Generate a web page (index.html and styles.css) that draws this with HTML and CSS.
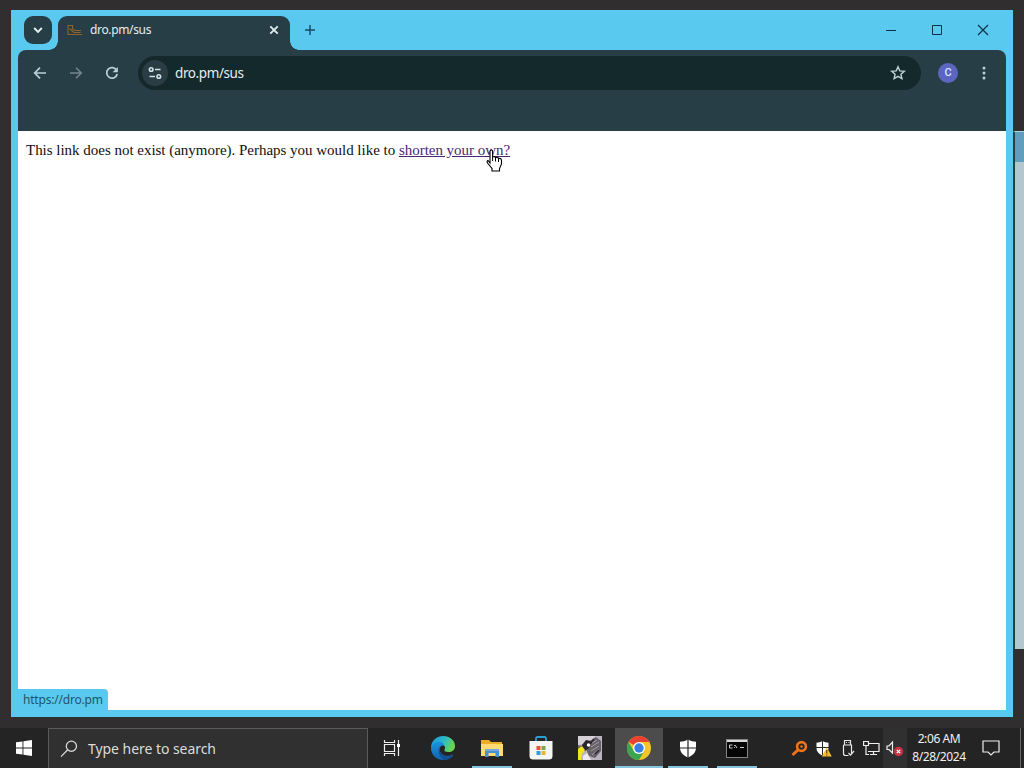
FILE: index.html
```html
<!DOCTYPE html>
<html lang="en">
<head>
    <meta charset="UTF-8">
    <title>dro.pm/sus</title>
    <link rel="stylesheet" href="styles.css">
</head>
<body>

    <div class="back-window"></div>

    <div class="desktop">
        <div class="window">
            <!-- Tab strip -->
            <div class="titlebar">
                <div class="tab-search">
                    <svg width="10" height="10" viewBox="0 0 10 10"><path d="M1.2 3L5 6.800L8.800 3" fill="none" stroke="#e4f0f2" stroke-width="1.9"/></svg>
                </div>
                <div class="tab">
                    <svg class="favicon" width="17" height="12" viewBox="0 0 17 12"><path d="M2 10V1.500h4.500v3.500L9 6.500h6M3.500 4.500L8 8.500h6.500M1.500 10.500H16" fill="none" stroke="#91622b" stroke-width="1.1"/></svg>
                    <span class="tab-title">dro.pm/sus</span>
                    <svg width="10" height="10" viewBox="0 0 10 10"><path d="M1.3 1.3L8.7 8.7M8.7 1.3L1.3 8.7" stroke="#e2eff0" stroke-width="1.8"/></svg>
                </div>
                <svg class="new-tab" width="12" height="12" viewBox="0 0 12 12"><path d="M6 1v10M1 6h10" stroke="#174861" stroke-width="1.4"/></svg>
                <div class="controls">
                    <span class="control"><svg width="12" height="12" viewBox="0 0 12 12"><path d="M1 6.5h10" stroke="#0b3047"/></svg></span>
                    <span class="control"><svg width="12" height="12" viewBox="0 0 12 12"><path d="M1.5 1.5h9v9h-9z" fill="none" stroke="#0b3047"/></svg></span>
                    <span class="control"><svg width="12" height="12" viewBox="0 0 12 12"><path d="M1 1l10 10M11 1L1 11" stroke="#0b3047" stroke-width="1.2"/></svg></span>
                </div>
            </div>

            <div class="toolbar">
                <div class="nav">
                    <svg class="nav-icon" width="14" height="14" viewBox="0 0 14 14"><path d="M13 7H2M7 1.7L1.7 7L7 12.3" fill="none" stroke="#b9d0d6" stroke-width="1.7"/></svg>
                    <svg class="nav-icon" width="14" height="14" viewBox="0 0 14 14"><path d="M1 7h11M7 1.7L12.3 7L7 12.3" fill="none" stroke="#71868f" stroke-width="1.6"/></svg>
                    <svg class="nav-icon" width="14" height="14" viewBox="0 0 14 14"><path d="M11.6 4.2A5.3 5.3 0 1 0 12.2 8" fill="none" stroke="#b9d0d6" stroke-width="1.7"/><path d="M12.9 .9v5.3H7.6z" fill="#b9d0d6"/></svg>
                </div>
                <div class="address">
                    <span class="site-info">
                        <svg width="14" height="14" viewBox="0 0 14 14" fill="none" stroke="#d3e4e6" stroke-width="1.6"><circle cx="3.2" cy="3.5" r="1.8"/><path d="M7 3.5h5.5M1.500 10.5H7"/><circle cx="10.8" cy="10.5" r="1.8"/></svg>
                    </span>
                    <span class="url">dro.pm/sus</span>
                    <svg width="16" height="16" viewBox="0 0 16 16"><path d="M8 1.8l1.8 4.1 4.5.4-3.4 2.9 1 4.4L8 11.3l-3.9 2.3 1-4.4-3.4-2.9 4.5-.4z" fill="none" stroke="#bdd3d8" stroke-width="1.4"/></svg>
                </div>
                <span class="avatar">C</span>
                <svg class="menu" width="4" height="14" viewBox="0 0 4 14" fill="#b9d0d6"><circle cx="2" cy="2" r="1.5"/><circle cx="2" cy="7" r="1.5"/><circle cx="2" cy="12" r="1.5"/></svg>
            </div>
            <div class="bookmarks"></div>

            <div class="page">
                <p class="message">This link does not exist (anymore). Perhaps you would like to <a class="link" href="#">shorten your own?</a></p>
                <div class="status">https://dro.pm</div>
            </div>
        </div>
    </div>

    <div class="taskbar">
        <div class="start">
            <svg width="16" height="16" viewBox="0 0 16 16" fill="#fff"><path d="M0 2.3L6.5 1.4V7.5H0zM7.4 1.2L16 0v7.5H7.4zM0 8.4h6.5v6.2L0 13.7zM7.4 8.4H16V16l-8.6-1.2z"/></svg>
        </div>
        <div class="search">
            <svg width="18" height="18" viewBox="0 0 18 18" fill="none" stroke="#d8d8d8" stroke-width="1.3"><circle cx="11.4" cy="6.2" r="5.1"/><path d="M7.7 9.8L1 16.6"/></svg>
            <span class="search-text">Type here to search</span>
        </div>
        <div class="app">
            <svg width="18" height="16" viewBox="0 0 18 16" fill="none" stroke="#eee" stroke-width="1.2"><path d="M1.5 0v2.5h10V0M1.5 16v-2.5h10V16M1.5 4.5h10v7h-10zM15.5 0v16"/><path d="M14 4h3v3h-3z" fill="#fff" stroke="none"/></svg>
        </div>
        <div class="apps">
            <div class="app">
                <svg width="24" height="24" viewBox="0 0 24 24">
                    <defs>
                        <linearGradient id="edgeTop" x1="0" y1="0" x2="1" y2=".4"><stop offset="0" stop-color="#1595d8"/><stop offset=".55" stop-color="#2cb9cc"/><stop offset="1" stop-color="#69d350"/></linearGradient>
                        <linearGradient id="edgeBody" x1="0" y1="0" x2="0" y2="1"><stop offset="0" stop-color="#1894dd"/><stop offset="1" stop-color="#1262ad"/></linearGradient>
                    </defs>
                    <path d="M0 12C0 5 5 0 12 0s12 4.500 12 10c0 4-3 6-6.500 6-3 0-4.500-1-4-2.300.8-1.300 1-3.700-1.500-4.700C8 7.500 2 8 0 12z" fill="url(#edgeTop)"/>
                    <path d="M0 12c1-4.500 5-6.500 8.500-6.200 2.500.2 4.500 1.600 4.700 3.500C9 9 7.500 13 9.500 16.500c2 3 6.500 4.500 11.500 2.500 1-.4 1.300.2.600 1C19.500 22.500 16 24 12 24 5 24 0 18.500 0 12z" fill="url(#edgeBody)"/>
                    <path d="M9 10c-3 4-1 11 4.500 14 4-.3 7-2 8.600-4.700-5.100 2.400-10.600.7-12.600-2.800C8.300 14.200 8 12 9 10z" fill="#124e92"/>
                </svg>
            </div>
            <div class="app running">
                <svg width="22" height="19" viewBox="0 0 22 19"><path d="M0 1h8l2 2h11v14H0z" fill="#eaae29"/><path d="M0 5h22v12H0z" fill="#fbdb72"/><path d="M4 10h14v8h-3.500v-4h-7v4H4z" fill="#4a8fd0"/><path d="M4 10h14v2H4z" fill="#76aadd"/></svg>
            </div>
            <div class="app">
                <svg width="24" height="24" viewBox="0 0 24 24"><path d="M7 6V2.800C7 1.700 7.500 1 8.500 1h7c1 0 1.500.7 1.500 1.800V6" fill="none" stroke="#2ba0d0" stroke-width="1.800"/><path d="M.5 5h23v15a3.500 3.500 0 0 1-3.500 3.500H4A3.500 3.500 0 0 1 .5 20z" fill="#f5f5f3"/><path d="M7.500 10h4v4h-4z" fill="#e65232"/><path d="M12.500 10h4v4h-4z" fill="#78a847"/><path d="M7.500 15h4v4h-4z" fill="#2f9edb"/><path d="M12.500 15h4v4h-4z" fill="#efb52c"/></svg>
            </div>
            <div class="app">
                <svg width="24" height="24" viewBox="0 0 24 24"><path d="M0 0h24v24H0z" fill="#b9b4bd"/><path d="M0 0h18L9 7 0 9z" fill="#d6d1d6"/><path d="M9 7L18 1l5 4v10l-6 7-6-2-3-7z" fill="#67616a"/><path d="M8 4l5 1-2 7-4 3-4-2 1-4z" fill="#29262b"/><path d="M14 7l5-3M13 11l8-5M13 15l8-5M14 19l7-6" stroke="#a39ea5"/><path d="M12 8l4-5M17 18l4-4" stroke="#29262b" stroke-width="1.500"/><path d="M0 12l4-2 3 4-3 4-1 6H0z" fill="#f2e51b"/><path d="M0 9l4 1-4 3z" fill="#716a68"/><circle cx="10.500" cy="9" r="1.700" fill="#fff"/><path d="M5 20l4-3 4 7H5z" fill="#eeeaf0"/></svg>
            </div>
            <div class="app running active">
                <svg width="24" height="24" viewBox="0 0 24 24"><circle cx="12" cy="12" r="12" fill="#f4c52b"/><path d="M12 12L1.600 6A12 12 0 0 1 22.400 6H12z" fill="#e94132"/><path d="M1.600 6A12 12 0 0 0 12 24l5.200-9L12 12 6.800 15z" fill="#3ba552"/><circle cx="12" cy="12" r="6" fill="#fff"/><circle cx="12" cy="12" r="4.700" fill="#377fe5"/></svg>
            </div>
            <div class="app running">
                <svg width="18" height="19" viewBox="0 0 18 19"><path d="M9 .5c2.600 1.600 5.300 2.200 8 2.200V9c0 4.500-3.500 7.500-8 9.500C4.500 16.500 1 13.500 1 9V2.700c2.700 0 5.400-.6 8-2.200z" fill="#fff"/><path d="M9 0v19M0 9h18" stroke="#242424" stroke-width="1.200"/></svg>
            </div>
            <div class="app running">
                <svg width="22" height="19" viewBox="0 0 22 19"><path d="M0 0h22v19H0z" fill="#858585"/><path d="M1 3h20v15H1z" fill="#050505"/><path d="M1 1h20v2H1z" fill="#d8d8d8"/><path d="M6.500 6H3.500v3h3M9 6l2 3M14 8.500h4" fill="none" stroke="#ccc"/><path d="M8 6.500h.8M8 8.500h.8" stroke="#ccc"/></svg>
            </div>
        </div>

        <div class="tray">
            <span class="tray-icon"><svg width="17" height="17" viewBox="0 0 17 17" fill="none" stroke="#ee741e"><circle cx="10.500" cy="6.500" r="4.400" stroke-width="2.600"/><path d="M7.500 9.500L1.500 15" stroke-width="3"/><circle cx="10.500" cy="6.500" r="1.200" fill="#ee741e" stroke="none"/></svg></span>
            <span class="tray-icon"><svg width="17" height="17" viewBox="0 0 17 17"><path d="M7.500 1c2 1.300 4 1.700 6 1.700V8c0 3.500-2.500 6-6 7.500C4 14 1.500 11.500 1.500 8V2.700c2 0 4-.4 6-1.700z" fill="#fff"/><path d="M7.500 0v16M1 7.500h13" stroke="#252525"/><path d="M11.800 7.500l5 9H6.800z" fill="#f4bd35"/><path d="M11.800 10v3.500M11.800 14.500v1.200" stroke="#463615"/></svg></span>
            <span class="tray-icon"><svg width="15" height="18" viewBox="0 0 15 18" fill="none" stroke="#e8e8e8" stroke-width="1.200"><path d="M4.500 6V1.500h6V6M3.500 6h8v8M3.500 6v8.500q0 2 2 2h3"/><path d="M6 3.500h1M8.500 3.500h1M8.500 14l2 2 3.500-4"/></svg></span>
            <span class="tray-icon"><svg width="17" height="16" viewBox="0 0 17 16" fill="none" stroke="#eee" stroke-width="1.200"><path d="M6 3.500h10v8H5M10.500 11.500v3M7 14.500h7M.6 1.500h4.900v4H.6zM3 5.500v9h3"/></svg></span>
            <span class="tray-icon muted"><svg width="18" height="17" viewBox="0 0 18 17"><path d="M1 6h2l3.500-4v11L3 9.500H1z" fill="none" stroke="#eee" stroke-width="1.200"/><circle cx="12.500" cy="11.500" r="4.700" fill="#c83343"/><path d="M10.800 9.800l3.400 3.400M14.200 9.800l-3.400 3.400" stroke="#fff" stroke-width="1.200"/></svg></span>
            <div class="clock">
                <span class="time">2:06 AM</span>
                <span class="date">8/28/2024</span>
            </div>
            <svg class="notice" width="18" height="18" viewBox="0 0 18 18"><path d="M1 2h16v11h-5l-3 3-3-3H1z" fill="none" stroke="#eee" stroke-width="1.200"/></svg>
        </div>
    </div>

    <svg class="cursor" width="18" height="23" viewBox="0 0 18 23"><path d="M4 14V2.500Q4 1 5.300 1T6.600 2.500V8Q9 6.800 9.500 8.800 12 7.500 12.500 9.600 15.500 8.800 15.500 11.500V15l-2 4.500V22H6v-2.500L1.500 14Q.5 11.500 2 11.500z" fill="#fff" stroke="#000" stroke-width="1.100"/><path d="M6.600 7v5M9.500 9v3.500M12.500 10v3" stroke="#000"/></svg>

</body>
</html>
```
FILE: styles.css
```css
body {
    margin: 0;
    width: 1024px;
    height: 768px;
    overflow: hidden;
    background: #302e2e;
    font-family: "Noto Sans", "Open Sans", sans-serif;
    display: flex;
    flex-direction: column;
}
svg {
    display: block;
    flex-shrink: 0;
}
.desktop {
    height: 728px;
    box-sizing: border-box;
    padding: 10px 11px 11px;
}
/* edge of the window that sits behind the browser */
.back-window {
    position: absolute;
    left: 1013px;
    top: 131px;
    width: 11px;
    height: 518px;
    box-sizing: border-box;
    background: linear-gradient(#629dbd 30px, #b3c7cf 30px);
    border-left: 2px solid #263e4b;
    border-top: 1px solid #a9d5e2;
}
.window {
    position: relative;
    width: 1002px;
    height: 707px;
    box-sizing: border-box;
    padding: 0 7px 7px;
    background: #59c9ef;
    display: flex;
    flex-direction: column;
}
.titlebar {
    height: 40px;
    display: flex;
    align-items: flex-start;
}
.tab-search {
    width: 28px;
    height: 28px;
    margin: 6px 6px 0;
    border-radius: 9px;
    background: #283e46;
    display: flex;
    align-items: center;
    justify-content: center;
}
.tab {
    position: relative;
    width: 232px;
    height: 34px;
    margin-top: 6px;
    box-sizing: border-box;
    padding: 0 11px 6px 8px;
    border-radius: 9px 9px 0 0;
    background: #283e46;
    display: flex;
    align-items: center;
}
.tab::before,
.tab::after {
    content: "";
    position: absolute;
    bottom: 0;
    width: 9px;
    height: 9px;
}
.tab::before {
    left: -9px;
    background: radial-gradient(circle at 0 0, transparent 8.5px, #283e46 9px);
}
.tab::after {
    right: -9px;
    background: radial-gradient(circle at 100% 0, transparent 8.5px, #283e46 9px);
}
.tab-title {
    flex: 1;
    margin-left: 7px;
    font-size: 12px;
    line-height: 16px;
    letter-spacing: -0.35px;
    color: #e4eef0;
}
.new-tab {
    margin: 14px 0 0 14px;
}
.controls {
    margin-left: auto;
    display: flex;
}
.control {
    width: 46px;
    height: 40px;
    display: flex;
    align-items: center;
    justify-content: center;
}
.toolbar {
    height: 46px;
    box-sizing: border-box;
    padding: 0 20px 0 15px;
    border-radius: 8px 8px 0 0;
    background: #283e46;
    display: flex;
    align-items: center;
}
.nav {
    display: flex;
    gap: 22px;
}
.address {
    width: 783px;
    height: 34px;
    margin-left: 19px;
    box-sizing: border-box;
    padding: 0 15px 0 4px;
    border-radius: 17px;
    background: #14292c;
    display: flex;
    align-items: center;
}
.site-info {
    width: 26px;
    height: 26px;
    border-radius: 50%;
    background: #2a3d44;
    display: flex;
    align-items: center;
    justify-content: center;
}
.url {
    flex: 1;
    margin-left: 7px;
    font-size: 13.5px;
    line-height: 20px;
    letter-spacing: -0.4px;
    color: #e3eef0;
}
.avatar {
    width: 20px;
    height: 20px;
    margin-left: 17px;
    border-radius: 50%;
    background: #5b66c0;
    color: #dfe3fa;
    font: 500 11px/20px Roboto, sans-serif;
    text-align: center;
}
.menu {
    margin-left: auto;
}
.bookmarks {
    height: 35px;
    background: #283e46;
}
.page {
    flex: 1;
    background: #fff;
    display: flex;
    flex-direction: column;
    justify-content: space-between;
}
.message {
    margin: 0;
    padding: 10px 8px;
    font: 15px/18px "Liberation Serif", serif;
    letter-spacing: -0.02px;
    color: #111;
}
.link {
    color: #4b2674;
}
.status {
    width: 90px;
    height: 21px;
    box-sizing: border-box;
    padding-left: 5px;
    border-radius: 0 4px 0 0;
    background: #59c9ef;
    color: #22566c;
    font-size: 12px;
    line-height: 21px;
    letter-spacing: -0.2px;
}
.cursor {
    position: absolute;
    left: 486px;
    top: 149px;
}

/* Taskbar */
.taskbar {
    height: 40px;
    background: #242424;
    display: flex;
}
.start {
    width: 48px;
    display: flex;
    align-items: center;
    justify-content: center;
}
.search {
    width: 320px;
    box-sizing: border-box;
    padding-left: 11px;
    border: 1px solid #5b5b5b;
    border-bottom: 0;
    background: #303030;
    display: flex;
    align-items: center;
}
.search-text {
    margin-left: 10px;
    font-size: 14px;
    letter-spacing: -0.05px;
    color: #dcdcdc;
    white-space: nowrap;
}
.apps {
    margin-left: 3px;
    display: flex;
    gap: 1px;
}
.app {
    width: 48px;
    height: 40px;
    box-sizing: border-box;
    display: flex;
    align-items: center;
    justify-content: center;
}
.running {
    background: linear-gradient(#84c6e0, #84c6e0) center bottom / 40px 2px no-repeat;
}
.active {
    background-color: #4c4c4c;
    background-size: 48px 2px;
}
.tray {
    margin-left: auto;
    display: flex;
    align-items: center;
    width: 234px;
    margin-right: 3px;
    box-sizing: border-box;
    border-right: 1px solid #666;
}
.tray-icon {
    width: 24px;
    height: 40px;
    display: flex;
    align-items: center;
    justify-content: center;
}
.muted {
    background: #303030;
}
.clock {
    width: 64px;
    display: flex;
    flex-direction: column;
    align-items: center;
    font-size: 12px;
    line-height: 18px;
    color: #f1f1f1;
}
.time,
.date {
    white-space: nowrap;
    letter-spacing: -0.4px;
}
.notice {
    margin-left: 11px;
}
```
